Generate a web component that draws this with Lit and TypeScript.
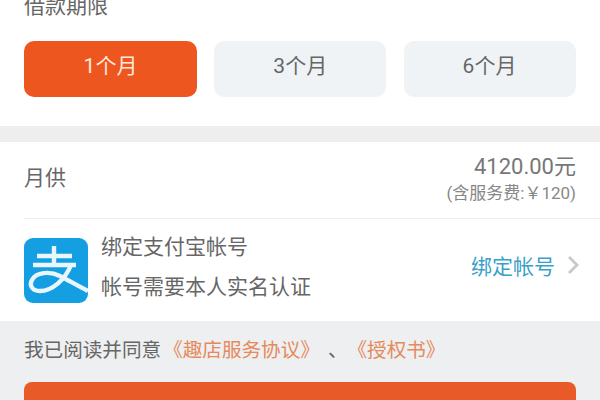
import { LitElement, html, css } from "lit";
import { customElement } from "lit/decorators.js";

@customElement("app-root")
export class AppRoot extends LitElement {
  static styles = css`
    :host {
      display: flex;
      flex-direction: column;
      width: 600px;
      height: 400px;
      overflow: hidden;
      background: #fff;
      color: #666;
      font-family: Roboto, "Noto Sans CJK SC", sans-serif;
      font-size: 21px;
    }
    .term {
      height: 126px;
      flex: none;
      padding: 0 24px;
      box-sizing: border-box;
    }
    .term-title {
      height: 47px;
      line-height: 24px;
      margin-top: -6px;
    }
    .options {
      display: grid;
      grid-template-columns: 173px 172px 172px;
      gap: 17.25px;
    }
    .option {
      height: 56px;
      border-radius: 10px;
      background: #f0f3f6;
      display: flex;
      align-items: center;
      justify-content: center;
      box-sizing: border-box;
      padding-bottom: 10px;
    }
    .option.on {
      background: #ee5620;
      color: #ffe9dc;
    }
    .band {
      height: 16px;
      flex: none;
      background: #eeeeee;
    }
    .monthly {
      height: 76px;
      flex: none;
      padding: 0 24px;
      box-sizing: border-box;
      display: flex;
      align-items: center;
      justify-content: space-between;
    }
    .monthly-label {
      padding-bottom: 8px;
    }
    .amount {
      text-align: right;
      color: #777;
      padding-bottom: 3px;
    }
    .amount-main {
      font-size: 22px;
      line-height: 30px;
    }
    .amount-sub {
      font-size: 17px;
      line-height: 23px;
      color: #888;
    }
    .divider {
      height: 1px;
      flex: none;
      margin-left: 24px;
      background: #efefef;
    }
    .bind {
      height: 102px;
      flex: none;
      padding: 0 20px 0 24px;
      box-sizing: border-box;
      display: flex;
      align-items: center;
      gap: 13px;
    }
    .logo {
      width: 64px;
      height: 65px;
      flex: none;
      display: block;
    }
    .bind-text {
      flex: 1;
      line-height: 40px;
      padding-bottom: 6px;
    }
    .bind-link {
      color: #3a9fc9;
      display: flex;
      align-items: center;
      gap: 11px;
      padding-bottom: 10px;
    }
    .chev {
      width: 14px;
      height: 20px;
      display: block;
    }
    .footer {
      flex: 1;
      background: #eeeff0;
      padding: 0 24px;
    }
    .agree {
      height: 61px;
      box-sizing: border-box;
      padding-bottom: 2px;
      display: flex;
      align-items: center;
      font-size: 19.6px;
      line-height: 28px;
      color: #666;
      white-space: nowrap;
    }
    .doc {
      color: #e58a5c;
    }
    .doc-first {
      margin-left: 2px;
    }
    .sep {
      margin: 0 0 0 8px;
    }
    .submit {
      height: 60px;
      border-radius: 8px;
      background: #e85a28;
    }
  `;

  render() {
    return html`
      <section class="term">
        <div class="term-title">借款期限</div>
        <div class="options">
          <div class="option on">1个月</div>
          <div class="option">3个月</div>
          <div class="option">6个月</div>
        </div>
      </section>
      <div class="band"></div>
      <section class="monthly">
        <div class="monthly-label">月供</div>
        <div class="amount">
          <div class="amount-main">4120.00元</div>
          <div class="amount-sub">(含服务费:￥120)</div>
        </div>
      </section>
      <div class="divider"></div>
      <section class="bind">
        <svg class="logo" viewBox="0 0 64 65" aria-hidden="true">
          <rect width="64" height="65" rx="9" fill="#159fe3"></rect>
          <g fill="none" stroke="#e9f6fc" stroke-width="4.4">
            <path d="M13 18H48M30 8V27M9 27H52"></path>
            <path d="M47 27C41 42 28 53 16 53C8 53 5 47 8 42C12 34 26 33 36 38C44 42 54 48 64 53"></path>
          </g>
        </svg>
        <div class="bind-text">
          <div>绑定支付宝帐号</div>
          <div>帐号需要本人实名认证</div>
        </div>
        <div class="bind-link">
          <span>绑定帐号</span>
          <svg class="chev" viewBox="0 0 14 20" aria-hidden="true">
            <path d="M3 2L11 10L3 18" fill="none" stroke="#c8c8c8" stroke-width="2.8"></path>
          </svg>
        </div>
      </section>
      <section class="footer">
        <div class="agree">
          <span>我已阅读并同意</span>
          <span class="doc doc-first">《趣店服务协议》</span>
          <span class="sep">、</span>
          <span class="doc">《授权书》</span>
        </div>
        <div class="submit"></div>
      </section>
    `;
  }
}
